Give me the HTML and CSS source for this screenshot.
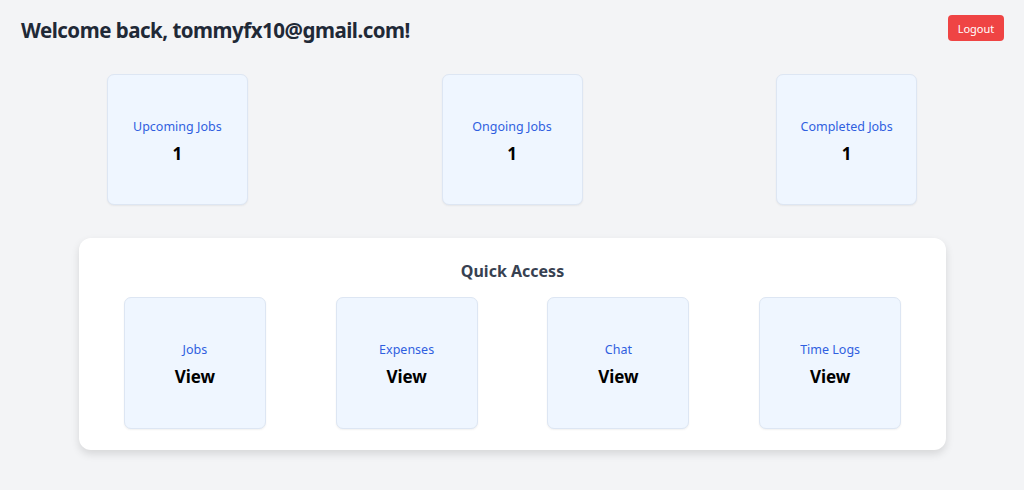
FILE: index.html
```html
<!DOCTYPE html>
<html lang="en">
<head>
  <meta charset="UTF-8" />
  <meta name="viewport" content="width=device-width, initial-scale=1" />
  <title>Dashboard</title>
  <link rel="stylesheet" href="styles.css">
</head>
<body>
  <div class="header">
    <h1 class="welcome">Welcome back, tommyfx10@gmail.com!</h1>
    <button class="btn-logout">Logout</button>
  </div>

  <div class="stats">
    <div class="stat-col">
      <div class="card">
        <div class="card-label">Upcoming Jobs</div>
        <div class="card-value">1</div>
      </div>
    </div>
    <div class="stat-col">
      <div class="card">
        <div class="card-label">Ongoing Jobs</div>
        <div class="card-value">1</div>
      </div>
    </div>
    <div class="stat-col">
      <div class="card">
        <div class="card-label">Completed Jobs</div>
        <div class="card-value">1</div>
      </div>
    </div>
  </div>

  <div class="quick">
    <h2 class="quick-title">Quick Access</h2>
    <div class="quick-grid">
      <div class="quick-col">
        <div class="card">
          <div class="card-label">Jobs</div>
          <div class="card-value view">View</div>
        </div>
      </div>
      <div class="quick-col">
        <div class="card">
          <div class="card-label">Expenses</div>
          <div class="card-value view">View</div>
        </div>
      </div>
      <div class="quick-col">
        <div class="card">
          <div class="card-label">Chat</div>
          <div class="card-value view">View</div>
        </div>
      </div>
      <div class="quick-col">
        <div class="card">
          <div class="card-label">Time Logs</div>
          <div class="card-value view">View</div>
        </div>
      </div>
    </div>
  </div>
</body>
</html>
```

FILE: styles.css
```css
* {
  box-sizing: border-box;
  font-family: 'Noto Sans', sans-serif;
  margin: 0;
  padding: 0;
}

body {
  background-color: #f3f4f6;
  color: #111;
  min-height: 100vh;
}

.header {
  display: flex;
  justify-content: space-between;
  align-items: center;
  padding: 15px 20px 0 21px;
  height: 56px;
}

.welcome {
  font-size: 20.5px;
  letter-spacing: -0.5px;
  font-weight: bold;
  color: #1f2937;
  line-height: 28px;
  margin-top: -11px;
}

.btn-logout {
  background-color: #ef4444;
  color: white;
  border: none;
  border-radius: 4px;
  font-size: 11px;
  width: 56px;
  height: 26px;
  margin-top: -15px;
  cursor: pointer;
}

.stats {
  display: flex;
  padding: 18px 10px 0 10px;
}

.stat-col {
  flex: 1;
  display: flex;
  justify-content: center;
}

.card {
  width: 141px;
  height: 131px;
  background-color: #eff6ff;
  border: 1px solid #dde6f3;
  border-radius: 7px;
  box-shadow: 0 1px 2px rgba(0, 0, 0, 0.06);
  display: flex;
  flex-direction: column;
  justify-content: center;
  align-items: center;
  gap: 8px;
  padding-top: 4px;
}

.card-label {
  font-size: 12.5px;
  color: #2f5fe0;
  line-height: 16px;
}

.card-value {
  font-size: 17px;
  font-weight: bold;
  color: #000;
  line-height: 22px;
}

.quick {
  background-color: white;
  margin: 33px 78px 0 79px;
  border-radius: 12px;
  box-shadow: 0 4px 8px rgba(0, 0, 0, 0.12);
  padding: 20px 10px 21px 10px;
}

.quick-title {
  font-size: 16px;
  font-weight: bold;
  color: #374151;
  text-align: center;
  line-height: 26px;
  margin-bottom: 13px;
}

.quick-grid {
  display: flex;
}

.quick-col {
  flex: 1;
  display: flex;
  justify-content: center;
}

.quick-col .card {
  width: 142px;
  height: 132px;
}
```
